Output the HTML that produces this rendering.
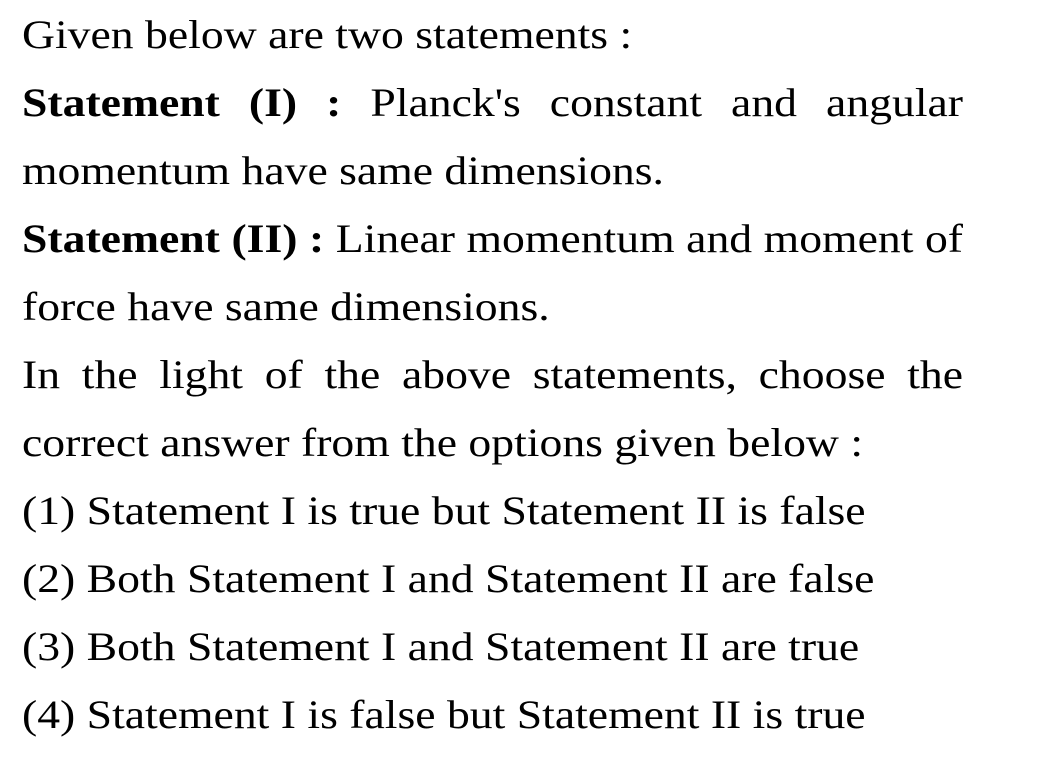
<!DOCTYPE html>
<html><head><meta charset="utf-8"><style>
html,body{margin:0;padding:0;background:#fff;width:1054px;height:762px;overflow:hidden}
.w{position:absolute;left:22px;top:1px;width:824px;transform:scaleX(1.142);transform-origin:0 0;font-family:"Liberation Serif",serif;font-size:40px;line-height:68px;color:#000}
.j{text-align:justify;text-align-last:justify}
p{margin:0;white-space:nowrap}
p.j{white-space:normal}
b{font-weight:bold}
</style></head><body><div class="w">
<p>Given below are two statements :</p>
<p class="j"><b>Statement (I) :</b> Planck's constant and angular</p>
<p>momentum have same dimensions.</p>
<p class="j"><b>Statement (II) :</b> Linear momentum and moment of</p>
<p>force have same dimensions.</p>
<p class="j">In the light of the above statements, choose the</p>
<p>correct answer from the options given below :</p>
<p>(1) Statement I is true but Statement II is false</p>
<p>(2) Both Statement I and Statement II are false</p>
<p>(3) Both Statement I and Statement II are true</p>
<p>(4) Statement I is false but Statement II is true</p>
</div></body></html>
